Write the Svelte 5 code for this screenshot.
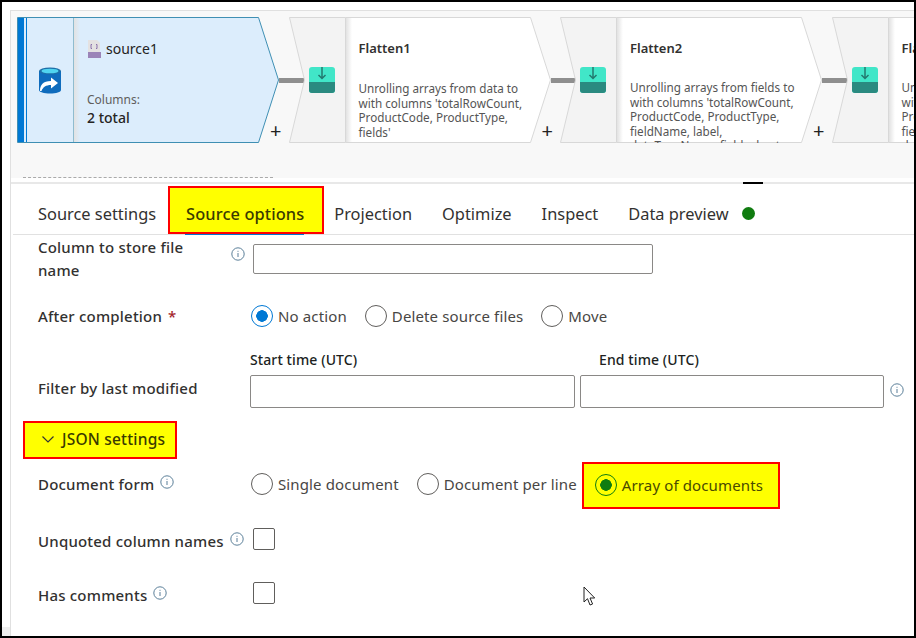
<script>
	const flattens = [
		{
			name: 'Flatten1',
			lines: ['Unrolling arrays from data to', "with columns 'totalRowCount,", 'ProductCode, ProductType,', "fields'"]
		},
		{
			name: 'Flatten2',
			tight: true,
			lines: ['Unrolling arrays from fields to', "with columns 'totalRowCount,", 'ProductCode, ProductType,', 'fieldName, label,', 'dataTypeName, fieldsubset']
		},
		{
			name: 'Flatten3',
			tight: true,
			lines: ['Unrolling arrays from fields to', "with columns 'totalRowCount,", 'ProductCode, ProductType,', 'fieldName, label,', 'dataTypeName, fieldsubset']
		}
	];
	const tabs = ['Projection', 'Optimize', 'Inspect'];
</script>

{#snippet info()}
	<svg class="info" viewBox="0 0 14 14" aria-hidden="true">
		<circle cx="7" cy="7" r="6.2" fill="none" stroke="#5b7f99" />
		<rect x="6.5" y="6" width="1" height="4" fill="#5b7f99" />
		<rect x="6.5" y="3.8" width="1" height="1" fill="#5b7f99" />
	</svg>
{/snippet}

{#snippet radio(label)}
	<label class="radio">
		<span class="dot"></span>
		{label}
	</label>
{/snippet}

<div class="frame">
	<div class="panel">
		<div class="canvas">
			<div class="node">
				<svg class="shape" viewBox="0 0 262 126" aria-hidden="true">
					<polygon points="0.5,0.5 241.5,0.5 261.5,63 241.5,125.5 0.5,125.5" fill="#dcedfc" stroke="#3f8fb3" />
					<rect x="1" y="1" width="6" height="124" fill="#0078d4" />
					<rect x="9" y="1" width="1" height="124" fill="#0078d4" />
					<rect x="56" y="1" width="1" height="124" fill="#8fbccf" />
				</svg>
				<div class="rail">
					<svg width="22" height="27" viewBox="0 0 22 27" aria-hidden="true">
						<path d="M0 4v19c0 2 5 3.500 11 3.500s11-1.500 11-3.500V4z" fill="#0f6cbd" />
						<ellipse cx="11" cy="4" rx="11" ry="3.600" fill="#1d6fa8" />
						<ellipse cx="11" cy="4" rx="8.500" ry="2.300" fill="#50d4f0" />
						<path d="M1 24c0-6 3-10 11-10v-3.500l7 5.500-7 5.500v-3.500c-5 0-8 2-9.500 6z" fill="#fff" />
					</svg>
				</div>
				<div class="body">
					<div class="source-title">
						<svg width="14" height="18" viewBox="0 0 14 18" aria-hidden="true">
							<path d="M1 0h9l3 3v15H1z" fill="#e4e2e2" />
							<rect x="1" y="12" width="13" height="6" fill="#9b84b8" />
							<path d="M5 4.500H4v4h1M9 4.500h1v4H9" fill="none" stroke="#8a70aa" />
						</svg>
						<span>source1</span>
					</div>
					<p class="columns">Columns:</p>
					<p class="total">2 total</p>
				</div>
				<span class="plus">+</span>
				<span class="link"></span>
			</div>
			{#each flattens as node}
				<div class="node">
					<svg class="shape" viewBox="0 0 262 126" aria-hidden="true">
						<polygon points="56.5,0.500 241.500,0.500 261.500,63 241.500,125.500 56.500,125.500" fill="#fff" stroke="#d8d8d8" />
						<polygon points="0.500,0.500 56.500,0.500 56.500,125.500 0.500,125.500 15.500,63" fill="#f3f3f3" stroke="#d8d8d8" />
					</svg>
					<div class="rail">
						<svg class="teal" width="26" height="26" viewBox="0 0 26 26" aria-hidden="true">
							<rect width="26" height="26" rx="3" fill="#41e6c8" />
							<path d="M0 15h26v8a3 3 0 0 1-3 3H3a3 3 0 0 1-3-3z" fill="#2a8a80" />
							<path d="M13 0v11M9.500 8l3.500 3.500L16.500 8" fill="none" stroke="#23796f" stroke-width="1.500" />
						</svg>
					</div>
					<div class="body">
						<h3>{node.name}</h3>
						<div class="desc" class:tight={node.tight}>
							{#each node.lines as line}<div>{line}</div>{/each}
						</div>
					</div>
					<span class="plus">+</span>
					<span class="link"></span>
				</div>
			{/each}
			<div class="dashes"></div>
		</div>

		<div class="splitter"><span></span></div>

		<nav class="tabs">
			<span>Source settings</span>
			<span class="active"><b>Source options</b></span>
			{#each tabs as tab}<span>{tab}</span>{/each}
			<span class="preview">Data preview <i></i></span>
		</nav>

		<div class="form">
			<div class="row first">
				<div class="label"><span class="wrap">Column to store file name</span><span class="push">{@render info()}</span></div>
				<input class="text wide" />
			</div>
			<div class="row after">
				<div class="label">After completion <em>*</em></div>
				<div class="options">
					<label class="radio"><span class="dot on"></span>No action</label>
					{@render radio('Delete source files')}
					{@render radio('Move')}
				</div>
			</div>
			<div class="row filter">
				<div class="label">Filter by last modified</div>
				<div class="times">
					<div class="time start">
						<span class="cap">Start time (UTC)</span>
						<input class="text" />
					</div>
					<div class="time end">
						<span class="cap">End time (UTC)</span>
						<input class="text" />
					</div>
					{@render info()}
				</div>
			</div>
			<div class="json"><svg width="12" height="7" viewBox="0 0 12 7" aria-hidden="true"><path d="M.5.500l5.500 5.500 5.500-5.500" fill="none" stroke="#333" stroke-width="1.200" /></svg>JSON settings</div>
			<div class="row doc">
				<div class="label">Document form {@render info()}</div>
				<div class="options">
					{@render radio('Single document')}
					{@render radio('Document per line')}
					<label class="radio picked"><span class="dot green"></span>Array of documents</label>
				</div>
			</div>
			<div class="row unquoted">
				<div class="label">Unquoted column names {@render info()}</div>
				<span class="check"></span>
			</div>
			<div class="row comments">
				<div class="label">Has comments {@render info()}</div>
				<span class="check"></span>
			</div>
		</div>
	</div>
	<svg class="cursor" width="14" height="21" viewBox="0 0 14 21" aria-hidden="true">
		<path d="M1 1v15l3.500-3.300 2.500 6.300 2.600-1-2.600-6h4.700z" fill="#fff" stroke="#222" />
	</svg>
	<span class="corner"></span>
</div>

<style>
	:global(body) {
		margin: 0;
	}
	.frame {
		position: relative;
		box-sizing: border-box;
		width: 916px;
		height: 638px;
		padding: 8px 0 0 8px;
		border: 2px solid #000;
		background: #fff;
		overflow: hidden;
		font-family: 'Noto Sans', 'Open Sans', sans-serif;
		color: #323130;
	}
	.corner {
		position: absolute;
		left: 0;
		bottom: 0;
		width: 8px;
		height: 9px;
		background: #efefef;
	}
	.panel {
		height: 100%;
		border-left: 1px solid #e0e0e0;
		border-top: 1px solid #e0e0e0;
	}

	.canvas {
		position: relative;
		display: flex;
		gap: 9.500px;
		box-sizing: border-box;
		height: 167px;
		padding: 6px 0 0 6px;
		background: #f8f8f8;
		overflow: hidden;
	}
	.dashes {
		position: absolute;
		left: 12px;
		top: 166px;
		width: 250px;
		border-top: 1px dashed #aaa;
	}
	.node {
		position: relative;
		flex: none;
		display: flex;
		width: 262px;
		height: 126px;
	}
	.shape {
		position: absolute;
		inset: 0;
		width: 262px;
		height: 126px;
	}
	.rail {
		position: relative;
		width: 57px;
		flex: none;
		display: flex;
		align-items: center;
		justify-content: center;
	}
	.rail svg {
		margin: 0 0 0 9px;
	}
	.body {
		position: relative;
		flex: 1;
		min-width: 0;
		padding: 21px 0 0 13px;
		height: 126px;
		box-sizing: border-box;
		overflow: hidden;
		background: linear-gradient(to right, #e2e2e2, transparent 6px);
		background-size: 100% 124px;
		background-position: 0 1px;
		background-repeat: no-repeat;
	}
	.source-title {
		display: flex;
		align-items: center;
		gap: 5px;
		margin-top: 1px;
		font-size: 14px;
		line-height: 20px;
		color: #252423;
	}
	.columns {
		margin: 32px 0 0;
		font-size: 12px;
		line-height: 17px;
		color: #605e5c;
	}
	.total {
		margin: 0;
		font-size: 14px;
		font-weight: 500;
		line-height: 20px;
		color: #252423;
	}
	h3 {
		margin: 0;
		font-size: 13px;
		font-weight: 600;
		line-height: 20px;
		color: #323130;
	}
	.desc {
		margin-top: 23px;
		font-size: 11.700px;
		line-height: 14.500px;
		color: #555;
		white-space: nowrap;
	}
	.desc.tight {
		margin-top: 22px;
	}
	.plus {
		position: absolute;
		left: 253px;
		top: 104px;
		font-size: 20px;
		line-height: 20px;
		color: #222;
	}
	.link {
		position: absolute;
		left: 262px;
		top: 61px;
		width: 25px;
		height: 5px;
		background: #8f8f8f;
	}

	.splitter {
		position: relative;
		height: 2px;
		margin-top: 4px;
		background: #e8e8e8;
	}
	.splitter span {
		position: absolute;
		left: 732px;
		top: 0;
		width: 20px;
		height: 2px;
		background: #000;
	}

	.tabs {
		display: flex;
		align-items: center;
		gap: 30px;
		box-sizing: border-box;
		height: 51px;
		padding: 8px 0 0 25px;
		margin-left: 2px;
		border-bottom: 1px solid #e1e1e1;
		font-size: 16.400px;
	}
	.tabs span {
		white-space: nowrap;
	}
	.tabs .active {
		position: relative;
		box-sizing: border-box;
		display: flex;
		align-items: center;
		align-self: flex-end;
		height: 48px;
		margin: 0 -20px 0 -18px;
		padding: 6px 18px 0 16px;
		border: 2px solid #f00;
		background: #ff0;
		color: #3a3a00;
	}
	.tabs .active b {
		font-weight: 500;
		letter-spacing: 0.100px;
	}
	.tabs .active::after {
		content: '';
		position: absolute;
		left: 15px;
		bottom: -3px;
		width: 119px;
		height: 1px;
		background: #0078d4;
	}
	.preview {
		display: flex;
		align-items: center;
		gap: 13px;
	}
	.preview i {
		width: 13px;
		height: 13px;
		border-radius: 50%;
		background: #107c10;
	}

	.form {
		font-size: 15px;
		letter-spacing: 0.200px;
	}
	.row {
		display: flex;
		box-sizing: border-box;
		padding-left: 27px;
	}
	.label {
		display: flex;
		align-items: center;
		gap: 6px;
		flex: none;
		width: 212px;
		font-weight: 500;
		color: #323130;
	}
	.label em {
		font-style: normal;
		color: #a4262c;
	}
	.first {
		height: 59px;
		line-height: 23px;
	}
	.first .label {
		align-items: flex-start;
		padding-top: 1px;
		height: 46px;
	}
	.wrap {
		width: 170px;
	}
	.push {
		margin: 0 5px 0 auto;
		display: flex;
		height: 40px;
		align-items: center;
	}
	.text {
		box-sizing: border-box;
		height: 33px;
		padding: 0;
		border: 1px solid #8a8886;
		border-radius: 2px;
		background: #fff;
	}
	.wide {
		width: 400px;
		height: 30px;
		margin: 9px 0 0 3px;
	}
	.after {
		height: 44px;
		align-items: center;
	}
	.options {
		display: flex;
		align-items: center;
		gap: 18px;
		margin-left: 1px;
		letter-spacing: 0.130px;
	}
	.radio {
		display: flex;
		align-items: center;
		gap: 5px;
		color: #484644;
		white-space: nowrap;
	}
	.dot {
		box-sizing: border-box;
		width: 22px;
		height: 22px;
		border: 1px solid #605e5c;
		border-radius: 50%;
		background: #fff;
	}
	.dot.on {
		border: 1.500px solid #0078d4;
		background: radial-gradient(circle, #0078d4 5.500px, #fff 6px);
	}
	.dot.green {
		border: 1.500px solid #107c10;
		background: radial-gradient(circle, #107c10 5.500px, #ff0 6px);
	}
	.filter {
		height: 74px;
		padding-bottom: 4px;
	}
	.filter .label {
		padding-top: 30px;
	}
	.times {
		display: flex;
		align-items: flex-end;
		gap: 5px;
	}
	.time {
		display: flex;
		flex-direction: column;
	}
	.start {
		width: 325px;
	}
	.end {
		width: 304px;
	}
	.end .cap {
		padding-left: 19px;
	}
	.times .info {
		margin: 0 0 11px 1px;
	}
	.cap {
		padding-top: 12px;
		height: 25px;
		line-height: 20px;
		font-size: 14px;
		letter-spacing: 0.100px;
		font-weight: 500;
		color: #201f1e;
	}
	.time .text {
		width: 100%;
	}
	.json {
		box-sizing: border-box;
		display: flex;
		align-items: center;
		gap: 8px;
		width: 154px;
		height: 38px;
		margin: 9px 0 0 12px;
		padding: 0 0 2px 17px;
		border: 2px solid #f00;
		background: #ff0;
		font-size: 15.500px;
		font-weight: 500;
		color: #3a3a00;
	}
	.doc {
		height: 50px;
		align-items: center;
	}
	.doc .options {
		height: 100%;
	}
	.picked {
		box-sizing: border-box;
		align-self: flex-end;
		height: 47px;
		width: 198px;
		margin-left: -13px;
		padding: 0 0 1px 11px;
		border: 2px solid #f00;
		background: #ff0;
		color: #4a4a00;
	}
	.unquoted {
		height: 64px;
		align-items: center;
	}
	.comments {
		height: 44px;
		align-items: center;
	}
	.check {
		box-sizing: border-box;
		width: 22px;
		height: 22px;
		margin: 0 0 4px 3px;
		border: 1px solid #605e5c;
		border-radius: 2px;
	}
	.info {
		flex: none;
		width: 14px;
		height: 14px;
		margin-bottom: 4px;
	}
	.cursor {
		position: absolute;
		left: 581px;
		top: 584px;
	}
</style>
